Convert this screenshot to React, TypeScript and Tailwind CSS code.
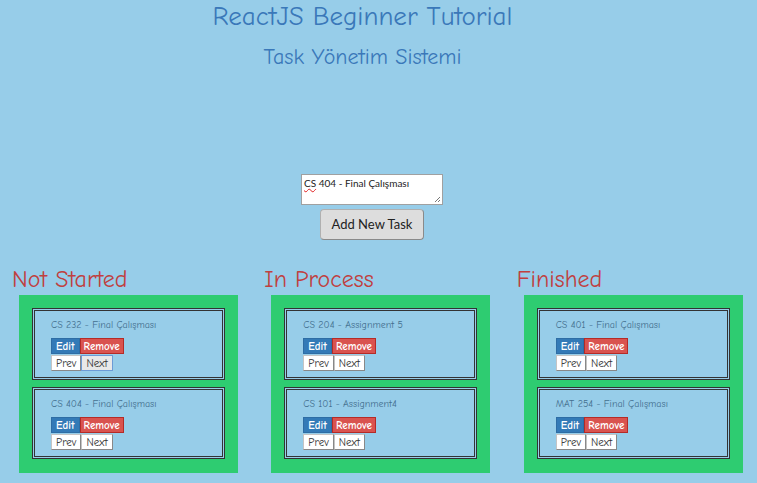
import React from 'react';

type Task = { id: number; title: string };

const columns: { name: string; tasks: Task[] }[] = [
  {
    name: 'Not Started',
    tasks: [
      { id: 1, title: 'CS 232 - Final Çalışması' },
      { id: 2, title: 'CS 404 - Final Çalışması' },
    ],
  },
  {
    name: 'In Process',
    tasks: [
      { id: 3, title: 'CS 204 - Assignment 5' },
      { id: 4, title: 'CS 101 - Assignment4' },
    ],
  },
  {
    name: 'Finished',
    tasks: [
      { id: 5, title: 'CS 401 - Final Çalışması' },
      { id: 6, title: 'MAT 254 - Final Çalışması' },
    ],
  },
];

const comic = "font-['Comic_Sans_MS','Comic_Neue','DejaVu_Sans',sans-serif]";

const plainBtn =
  'h-[16px] px-[4px] bg-white border border-[#c4c4c4] border-r-[#888] border-b-[#888] text-[11px] text-[#333] leading-none';

const TaskCard: React.FC<{ task: Task; focusNext?: boolean }> = ({ task, focusNext }) => (
  <div className="bg-[#97cde9] border-[3px] border-double border-[#333] h-[72px] px-[16px] pt-[7px]">
    <p className="text-[10px] leading-[14px] text-[#44708f]">{task.title}</p>
    <div className="mt-[6px] flex">
      <button className="h-[16px] px-[4px] bg-[#337ab7] border border-[#2e6da4] text-white text-[11px] font-bold leading-none">
        Edit
      </button>
      <button className="h-[16px] px-[3px] bg-[#d9534f] border border-[#b52b27] text-white text-[11px] font-bold leading-none">
        Remove
      </button>
    </div>
    <div className="mt-px flex">
      <button className={plainBtn}>Prev</button>
      <button
        className={
          focusNext
            ? 'h-[16px] px-[4px] bg-[#e8e8e8] border border-[#6c9bd6] text-[11px] text-[#333] leading-none'
            : plainBtn
        }
      >
        Next
      </button>
    </div>
  </div>
);

export default function App() {
  return (
    <div className={`min-h-screen w-full bg-[#97cde9] ${comic} overflow-hidden`}>
      <h1 className="text-center text-[27px] leading-[30px] pt-[2px] pr-[32px] text-[#3a78b9]">
        ReactJS Beginner Tutorial
      </h1>
      <h2 className="text-center text-[22px] leading-[26px] mt-[12px] pr-[32px] text-[#3a78b9]">
        Task Yönetim Sistemi
      </h2>

      <div className="mt-[104px] flex flex-col items-center pr-[13px] font-['Lato',sans-serif]">
        <div className="relative w-[142px] h-[31px] bg-white border border-[#a0a0a0] px-[2px] pt-[2px] text-[10px] leading-[13px] text-[#222]">
          <span className="underline decoration-wavy decoration-[#e02020]">CS</span> 404 - Final Çalışması
          <svg className="absolute right-[1px] bottom-[1px]" width="7" height="7" viewBox="0 0 7 7">
            <path d="M6 1 L1 6 M6 4 L4 6" stroke="#777" strokeWidth="1" />
          </svg>
        </div>
        <button className="mt-[4px] w-[104px] h-[31px] bg-[#dddddd] border border-[#b0b0b0] border-r-[#8a8a8a] border-b-[#8a8a8a] rounded-[4px] text-[13px] text-[#222]">
          Add New Task
        </button>
      </div>

      <div className="mt-[25px] grid grid-cols-3">
        {columns.map((col, ci) => (
          <div key={col.name}>
            <h3 className="pl-[12px] text-[24px] leading-[28px] text-[#c0403f]">{col.name}</h3>
            <div className="mt-[2px] ml-[19px] w-[219px] bg-[#2ecc71] px-[13px] pt-[13px] pb-[14px] flex flex-col gap-[7px]">
              {col.tasks.map((t, ti) => (
                <TaskCard key={t.id} task={t} focusNext={ci === 0 && ti === 0} />
              ))}
            </div>
          </div>
        ))}
      </div>
    </div>
  );
}
